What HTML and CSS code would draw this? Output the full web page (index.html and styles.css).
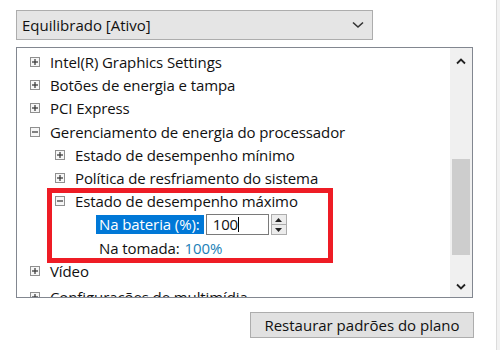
FILE: index.html
```html
<!DOCTYPE html>
<html lang="pt">
<head>
    <meta charset="UTF-8">
    <title>Opções de Energia</title>
    <link rel="stylesheet" href="styles.css">
</head>
<body>
    <div class="page">
        <div class="plan-select">
            <span>Equilibrado [Ativo]</span>
            <svg class="chev" width="12" height="8" viewBox="0 0 12 8"><path d="M1 1.5 L6 6 L11 1.5" fill="none" stroke="#333" stroke-width="1.6"/></svg>
        </div>

        <div class="tree">
            <div class="tree-items">
                <div class="row lvl1"><span class="exp plus"></span>Intel(R) Graphics Settings</div>
                <div class="row lvl1"><span class="exp plus"></span>Botões de energia e tampa</div>
                <div class="row lvl1"><span class="exp plus"></span>PCI Express</div>
                <div class="row lvl1"><span class="exp minus"></span>Gerenciamento de energia do processador</div>
                <div class="row lvl2"><span class="exp plus"></span>Estado de desempenho mínimo</div>
                <div class="row lvl2"><span class="exp plus"></span>Política de resfriamento do sistema</div>
                <div class="row lvl2"><span class="exp minus"></span>Estado de desempenho máximo</div>
                <div class="row lvl3">
                    <span class="selected">Na bateria (%):</span>
                    <span class="spin">
                        <span class="spin-box">100<span class="caret"></span></span>
                        <span class="spin-btns">
                            <span class="spin-btn"><svg width="7" height="4" viewBox="0 0 7 4"><path d="M0 4 L3.5 0 L7 4Z" fill="#222"/></svg></span>
                            <span class="spin-btn"><svg width="7" height="4" viewBox="0 0 7 4"><path d="M0 0 L3.5 4 L7 0Z" fill="#222"/></svg></span>
                        </span>
                    </span>
                </div>
                <div class="row lvl3 plug">Na tomada: <span class="value">100%</span></div>
                <div class="row lvl1"><span class="exp plus"></span>Vídeo</div>
                <div class="row lvl1 cut"><span class="exp plus"></span>Configurações de multimídia</div>
            </div>
            <div class="scrollbar">
                <svg class="arrow" width="10" height="7" viewBox="0 0 10 7"><path d="M1 5.5 L5 1.5 L9 5.5" fill="none" stroke="#222" stroke-width="1.8"/></svg>
                <div class="thumb"></div>
                <svg class="arrow" width="10" height="7" viewBox="0 0 10 7"><path d="M1 1.5 L5 5.5 L9 1.5" fill="none" stroke="#222" stroke-width="1.8"/></svg>
            </div>
            <div class="highlight-box"></div>
        </div>

        <div class="actions">
            <button class="restore">Restaurar padrões do plano</button>
        </div>
    </div>
    <div class="edge"></div>
</body>
</html>
```

FILE: styles.css
```css
body {
    margin: 0;
    background: #fff;
    font-family: "Open Sans", "Noto Sans", sans-serif;
    font-size: 14px;
    color: #111;
}
.page {
    padding: 10px 0 0 16px;
}
.plan-select {
    box-sizing: border-box;
    width: 357px;
    height: 30px;
    background: #e5e5e5;
    border: 1px solid #adadad;
    display: flex;
    align-items: center;
    justify-content: space-between;
    padding: 0 8px 0 5px;
    font-size: 15px;
}
.tree {
    position: relative;
    box-sizing: border-box;
    width: 457px;
    height: 251px;
    margin-top: 7px;
    border: 1px solid #828790;
    display: flex;
    overflow: hidden;
}
.tree-items {
    flex: 1;
    padding-top: 2px;
}
.row {
    display: flex;
    align-items: center;
    height: 23.3px;
    white-space: nowrap;
    font-size: 15px;
    letter-spacing: -0.1px;
}
.lvl1 {
    padding-left: 13px;
}
.lvl2 {
    padding-left: 38px;
}
.lvl3 {
    padding-left: 82px;
}
.exp {
    box-sizing: border-box;
    width: 10px;
    height: 10px;
    margin-right: 10px;
    border: 1px solid #8f8f8f;
    background: #f6f6f6;
    position: relative;
    flex-shrink: 0;
}
.exp::before {
    content: "";
    position: absolute;
    left: 1px;
    top: 3px;
    width: 6px;
    height: 2px;
    transform: scaleY(0.6);
    background: #333;
}
.plus::after {
    content: "";
    position: absolute;
    left: 3px;
    top: 1px;
    width: 2px;
    height: 6px;
    transform: scaleX(0.6);
    background: #333;
}
.cut {
    margin-top: 2px;
}
.selected {
    background: #0078d7;
    color: #fff;
    padding: 0 4px 0 3px;
    margin-left: -3px;
    line-height: 19px;
}
.spin {
    display: flex;
    margin-left: 2px;
}
.spin-box {
    box-sizing: border-box;
    width: 63px;
    height: 21px;
    border: 1px solid #7a7a7a;
    padding-left: 6px;
    line-height: 19px;
    display: flex;
    align-items: center;
}
.caret {
    width: 1px;
    height: 15px;
    background: #000;
}
.spin-btns {
    display: flex;
    flex-direction: column;
    margin-left: 2px;
    width: 16px;
    height: 21px;
}
.spin-btn {
    flex: 1;
    box-sizing: border-box;
    border: 1px solid #acacac;
    background: #ececec;
    display: flex;
    align-items: center;
    justify-content: center;
}
.spin-btn + .spin-btn {
    border-top: none;
}
.plug .value {
    color: #1b7fb7;
    margin-left: 5px;
}
.scrollbar {
    width: 22px;
    background: #f0f0f0;
    display: flex;
    flex-direction: column;
    align-items: center;
}
.arrow {
    margin: 10px 0;
}
.thumb {
    width: 18px;
    height: 96px;
    background: #cdcdcd;
    margin-top: 84px;
    margin-bottom: auto;
}
.scrollbar .arrow:last-child {
    margin-bottom: 7px;
}
.highlight-box {
    position: absolute;
    left: 30px;
    top: 140px;
    width: 286px;
    height: 75px;
    box-sizing: border-box;
    border: 5px solid #ee1c25;
}
.actions {
    width: 458px;
    display: flex;
    justify-content: flex-end;
    margin-top: 14px;
}
.restore {
    width: 224px;
    height: 26px;
    background: #e1e1e1;
    border: 1px solid #adadad;
    font-family: inherit;
    font-size: 15px;
    color: #111;
    padding: 0;
}
.edge {
    position: fixed;
    top: 0;
    right: 0;
    width: 3px;
    height: 100%;
    background: #f2f2f2;
    border-left: 1px solid #dcdcdc;
}
```
